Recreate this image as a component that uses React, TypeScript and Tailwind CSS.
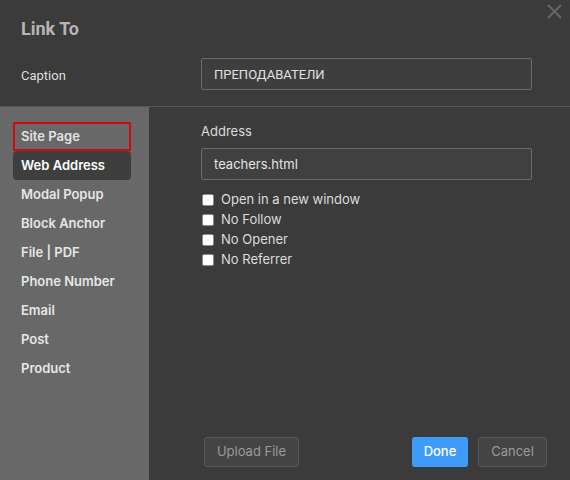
const ITEMS = [
  "Site Page",
  "Web Address",
  "Modal Popup",
  "Block Anchor",
  "File | PDF",
  "Phone Number",
  "Email",
  "Post",
  "Product",
];

const OPTIONS = ["Open in a new window", "No Follow", "No Opener", "No Referrer"];

export default function App() {
  return (
    <div className="relative flex h-[480px] w-[570px] flex-col overflow-hidden bg-[#3b3b3b] font-['Inter',sans-serif]">
      {/* close */}
      <svg className="absolute right-[8px] top-[4px]" width="15" height="15" viewBox="0 0 15 15">
        <path d="M1 1L14 14M14 1L1 14" stroke="#666" strokeWidth="2" />
      </svg>

      <div className="h-[107px] shrink-0 border-b border-[#565656] px-[21px]">
        <h1 className="pt-[18px] font-['Roboto',sans-serif] text-[18px] font-bold leading-[22px] text-[#b5b5b5]">Link To</h1>
        <div className="mt-[18px] flex items-center">
          <span className="w-[180px] pt-[4px] font-['Roboto',sans-serif] text-[13px] text-[#dedede]">Caption</span>
          <input
            readOnly
            value="ПРЕПОДАВАТЕЛИ"
            className="h-[32px] w-[331px] rounded-[2px] border border-[#6b6b6b] bg-[#3e3e3e] px-[12px] font-['Roboto',sans-serif] text-[13px] text-[#e0e0e0] outline-none"
          />
        </div>
      </div>

      <div className="flex min-h-0 flex-1">
        <aside className="w-[149px] shrink-0 bg-[#686868] pl-[13px] pt-[15px]">
          {ITEMS.map((it, i) => (
            <div
              key={it}
              className={
                "flex h-[29px] w-[118px] items-center rounded-[4px] border-2 px-[6px] text-[13px] font-semibold " +
                (i === 0
                  ? "rounded-none border-[#d30a0a] text-[#e2e2e2]"
                  : i === 1
                  ? "border-transparent bg-[#3e3e3e] text-white"
                  : "border-transparent text-[#e6e6e6]")
              }
            >
              {it}
            </div>
          ))}
        </aside>

        <main className="flex flex-1 flex-col pl-[52px] pr-[38px] pt-[16px]">
          <label className="text-[13px] leading-[16px] text-[#dcdcdc]">Address</label>
          <input
            readOnly
            value="teachers.html"
            className="mt-[9px] h-[32px] w-[331px] rounded-[2px] border border-[#6b6b6b] bg-[#404040] px-[12px] text-[13px] text-[#e4e4e4] outline-none"
          />
          <div className="mt-[10px] flex flex-col">
            {OPTIONS.map((o) => (
              <label key={o} className="flex h-[20px] items-center gap-[7px] text-[13px] text-[#dcdcdc]">
                <span className="ml-[1px] h-[12px] w-[12px] rounded-[2px] border border-[#8a8a8a] bg-white" />
                {o}
              </label>
            ))}
          </div>

          <div className="mt-auto mb-[13px] flex items-center">
            <button className="ml-[3px] h-[30px] w-[95px] rounded-[3px] border border-[#575757] bg-[#444] text-[13px] text-[#9a9a9a]">
              Upload File
            </button>
            <button className="ml-auto h-[30px] w-[56px] rounded-[3px] bg-[#3e9bf8] text-[13px] font-medium text-white">
              Done
            </button>
            <button className="ml-[10px] mr-[-15px] h-[30px] w-[69px] rounded-[3px] border border-[#575757] bg-[#444] text-[13px] text-[#9a9a9a]">
              Cancel
            </button>
          </div>
        </main>
      </div>
    </div>
  );
}
